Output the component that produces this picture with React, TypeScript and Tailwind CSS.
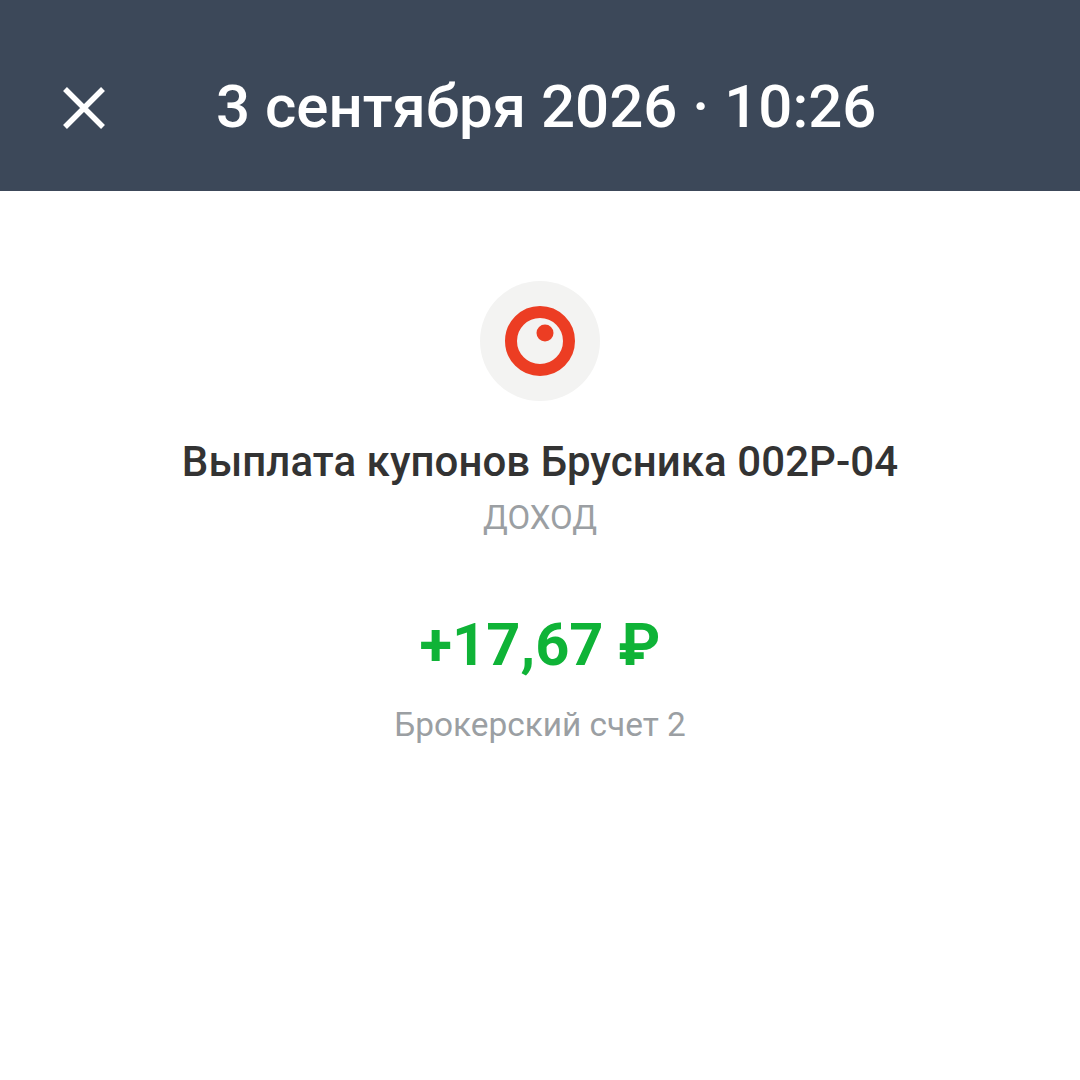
const fontRoboto = "font-['Roboto',sans-serif]";

export default function App() {
  return (
    <div className={`w-[1080px] h-[1080px] bg-white flex flex-col items-center ${fontRoboto}`}>
      <header className="w-full h-[191px] bg-[#3c4859] flex items-center pl-[63px] pt-[24px]">
        <svg width="42" height="42" viewBox="0 0 42 42" fill="none">
          <path d="M2 2L40 40M40 2L2 40" stroke="#fff" strokeWidth="5.5" />
        </svg>
        <h1 className="ml-[111px] text-[60px] leading-[70px] font-medium text-white whitespace-nowrap mt-[-1px]">
          3 сентября 2026 · 10:26
        </h1>
      </header>

      <div className="mt-[90px] w-[120px] h-[120px] rounded-full bg-[#f3f3f2] flex items-center justify-center">
        <svg width="72" height="72" viewBox="0 0 72 72">
          <circle cx="36" cy="36" r="29" fill="none" stroke="#ec3d23" strokeWidth="12" />
          <circle cx="41" cy="28" r="8.5" fill="#ec3d23" />
        </svg>
      </div>

      <div className="mt-[33px] text-[42px] leading-[56px] font-medium tracking-[0.06px] text-[#333333] whitespace-nowrap">
        Выплата купонов Брусника 002Р-04
      </div>
      <div className="mt-[7px] text-[33px] leading-[42px] text-[#9b9fa3]">ДОХОД</div>

      <div className="mt-[71px] text-[59.6px] leading-[70px] font-bold text-[#0fb337] whitespace-nowrap">
        +17,67 ₽
      </div>
      <div className="mt-[26px] text-[33.4px] leading-[38px] text-[#9b9fa3] whitespace-nowrap">
        Брокерский счет 2
      </div>
    </div>
  );
}
